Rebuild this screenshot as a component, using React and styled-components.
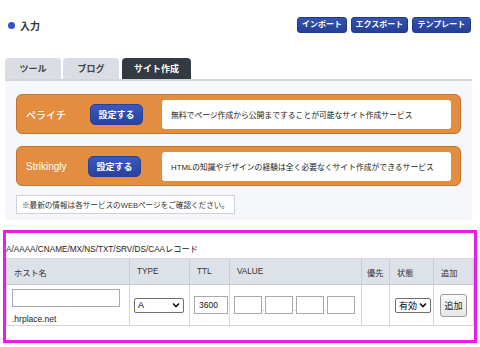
import styled, { createGlobalStyle } from 'styled-components';

const GlobalStyle = createGlobalStyle`
  html, body {
    margin: 0;
    padding: 0;
    background: #ffffff;
  }
  body {
    font-family: "Liberation Sans", "Noto Sans CJK JP", sans-serif;
    color: #222;
  }
`;

const Page = styled.div`
  width: 480px;
  height: 347px;
  overflow: hidden;
`;

const TopBar = styled.div`
  display: flex;
  align-items: center;
  justify-content: space-between;
  padding: 16px 9px 0 8px;
  height: 18px;
`;

const Heading = styled.div`
  display: flex;
  align-items: center;
  gap: 5px;
  font-size: 10px;
  font-weight: 700;
  color: #333;
`;

const Dot = styled.span`
  width: 7px;
  height: 7px;
  border-radius: 50%;
  background: #3450c8;
`;

const Actions = styled.div`
  display: flex;
  gap: 4px;
`;

const ActionButton = styled.button`
  width: ${({ $w }) => $w}px;
  height: 16px;
  padding: 0;
  border: 1px solid #1f3a8a;
  border-radius: 3px;
  background: linear-gradient(#3553b0, #243f96);
  color: #fff;
  font-family: inherit;
  font-size: 8px;
  font-weight: 700;
  line-height: 14px;
  white-space: nowrap;
`;

const Tabs = styled.div`
  display: flex;
  gap: 2px;
  margin: 24px 5px 0 5px;
`;

const Tab = styled.div`
  width: ${({ $w }) => $w}px;
  height: 21px;
  border-radius: 4px 4px 0 0;
  display: flex;
  align-items: center;
  justify-content: center;
  font-size: 9px;
  font-weight: 700;
  background: ${({ $active }) => ($active ? '#343a42' : '#dadde3')};
  color: ${({ $active }) => ($active ? '#fff' : '#444')};
  margin-left: ${({ $gap }) => $gap || 0}px;
`;

const Panel = styled.div`
  margin: 0 8px 0 5px;
  border-top: 2px solid #d3d6dc;
  background: #f5f7fb;
  padding: 13px 11px 6px 11px;
  display: flex;
  flex-direction: column;
  gap: 12px;
`;

const ServiceBox = styled.div`
  display: flex;
  align-items: center;
  height: 38px;
  padding: 0 9px;
  background: #e38d40;
  border: 1px solid #c27430;
  border-radius: 6px;
`;

const ServiceName = styled.div`
  width: ${({ $w }) => $w}px;
  color: #fff;
  font-size: 10px;
  font-weight: 500;
`;

const SetButton = styled.button`
  width: 53px;
  height: 21px;
  border: 1px solid #2a3f94;
  border-radius: 5px;
  background: linear-gradient(#3a59c0, #28429c);
  color: #fff;
  font-family: inherit;
  font-size: 9px;
  font-weight: 700;
  padding: 0;
`;

const Description = styled.div`
  flex: 1;
  height: 29px;
  margin-left: ${({ $ml }) => $ml}px;
  background: #fff;
  border-radius: 3px;
  display: flex;
  align-items: center;
  padding-left: 9px;
  font-size: 7.8px;
  color: #222;
  white-space: nowrap;
`;

const Notice = styled.div`
  align-self: flex-start;
  margin-top: -3px;
  height: 17px;
  padding: 0 5px;
  border: 1px solid #cfd2d6;
  background: #fff;
  display: flex;
  align-items: center;
  font-size: 7.6px;
  color: #333;
`;

const Frame = styled.div`
  margin: 10px 3px 0 3px;
  border: 3px solid #e81ee8;
  height: 107px;
  box-sizing: content-box;
`;

const RecordLabel = styled.div`
  font-size: 8.2px;
  color: #222;
  padding: 9px 0 0 0;
  height: 16px;
`;

const Table = styled.table`
  width: 467px;
  border-collapse: collapse;
  table-layout: fixed;
`;

const Col = styled.col`
  width: ${({ $w }) => $w}px;
`;

const Th = styled.th`
  height: 25px;
  background: #dde1e8;
  border: 1px solid #c9ccd2;
  border-top: 1px solid #d6d9de;
  text-align: left;
  padding: 0 0 0 ${({ $pl }) => $pl || 7}px;
  font-size: 8.2px;
  font-weight: 400;
  color: #333;
  white-space: nowrap;
`;

const Td = styled.td`
  height: 40px;
  border: 1px solid #d3d6da;
  border-top: none;
  padding: 0 0 0 ${({ $pl }) => $pl || 4}px;
  vertical-align: middle;
  font-size: 8.5px;
`;

const HostCell = styled.div`
  display: flex;
  flex-direction: column;
  gap: 7px;
  padding-top: 2px;
`;

const TextBox = styled.input`
  box-sizing: border-box;
  width: ${({ $w }) => $w}px;
  height: ${({ $h }) => $h || 18}px;
  border: 1px solid #a9a9a9;
  border-radius: 0;
  padding: 0 4px;
  font-family: inherit;
  font-size: 8.5px;
  color: #111;
  background: #fff;
`;

const Domain = styled.span`
  font-size: 8.5px;
  color: #222;
`;

const Select = styled.div`
  box-sizing: border-box;
  width: ${({ $w }) => $w}px;
  height: 15px;
  border: 1px solid #6f6f6f;
  border-radius: 2px;
  background: #fff;
  display: flex;
  align-items: center;
  justify-content: space-between;
  padding: 0 3px;
  font-size: ${({ $fs }) => $fs || 9}px;
  color: #000;
`;

const IpRow = styled.div`
  display: flex;
  align-items: flex-end;
`;

const IpDot = styled.span`
  width: 3px;
  text-align: center;
  font-size: 7px;
  color: #555;
  line-height: 10px;
`;

const AddButton = styled.button`
  width: 27px;
  height: 23px;
  border: 1px solid #9a9a9a;
  border-radius: 3px;
  background: linear-gradient(#fafafa, #e6e6e6);
  font-family: inherit;
  font-size: 9px;
  color: #222;
  padding: 0;
`;

const Chevron = () => (
  <svg width="8" height="6" viewBox="0 0 8 6">
    <path d="M1 1.5 L4 4.5 L7 1.5" fill="none" stroke="#111" strokeWidth="1.6" />
  </svg>
);

export default function App() {
  return (
    <Page>
      <GlobalStyle />
      <TopBar>
        <Heading>
          <Dot />
          入力
        </Heading>
        <Actions>
          <ActionButton $w={50}>インポート</ActionButton>
          <ActionButton $w={57}>エクスポート</ActionButton>
          <ActionButton $w={59}>テンプレート</ActionButton>
        </Actions>
      </TopBar>

      <Tabs>
        <Tab $w={56}>ツール</Tab>
        <Tab $w={56}>ブログ</Tab>
        <Tab $w={69} $active $gap={1}>サイト作成</Tab>
      </Tabs>

      <Panel>
        <ServiceBox>
          <ServiceName $w={64}>ペライチ</ServiceName>
          <SetButton>設定する</SetButton>
          <Description $ml={19}>無料でページ作成から公開まですることが可能なサイト作成サービス</Description>
        </ServiceBox>
        <ServiceBox>
          <ServiceName $w={62}>Strikingly</ServiceName>
          <SetButton>設定する</SetButton>
          <Description $ml={21}>HTMLの知識やデザインの経験は全く必要なくサイト作成ができるサービス</Description>
        </ServiceBox>
        <Notice>※最新の情報は各サービスのWEBページをご確認ください。</Notice>
      </Panel>

      <Frame>
        <RecordLabel>A/AAAA/CNAME/MX/NS/TXT/SRV/DS/CAAレコード</RecordLabel>
        <Table>
          <colgroup>
            <Col $w={123} />
            <Col $w={60} />
            <Col $w={40} />
            <Col $w={132} />
            <Col $w={28} />
            <Col $w={44} />
            <Col $w={40} />
          </colgroup>
          <thead>
            <tr>
              <Th>ホスト名</Th>
              <Th>TYPE</Th>
              <Th>TTL</Th>
              <Th>VALUE</Th>
              <Th $pl={5}>優先</Th>
              <Th>状態</Th>
              <Th>追加</Th>
            </tr>
          </thead>
          <tbody>
            <tr>
              <Td $pl={5}>
                <HostCell>
                  <TextBox $w={108} />
                  <Domain>.hrplace.net</Domain>
                </HostCell>
              </Td>
              <Td $pl={4}>
                <Select $w={50}>
                  A
                  <Chevron />
                </Select>
              </Td>
              <Td $pl={4}>
                <TextBox $w={34} defaultValue="3600" />
              </Td>
              <Td $pl={4}>
                <IpRow>
                  <TextBox $w={28} />
                  <IpDot>.</IpDot>
                  <TextBox $w={28} />
                  <IpDot>.</IpDot>
                  <TextBox $w={28} />
                  <IpDot>.</IpDot>
                  <TextBox $w={28} />
                </IpRow>
              </Td>
              <Td />
              <Td $pl={5}>
                <Select $w={36}>
                  有効
                  <Chevron />
                </Select>
              </Td>
              <Td $pl={6}>
                <AddButton>追加</AddButton>
              </Td>
            </tr>
          </tbody>
        </Table>
      </Frame>
    </Page>
  );
}
